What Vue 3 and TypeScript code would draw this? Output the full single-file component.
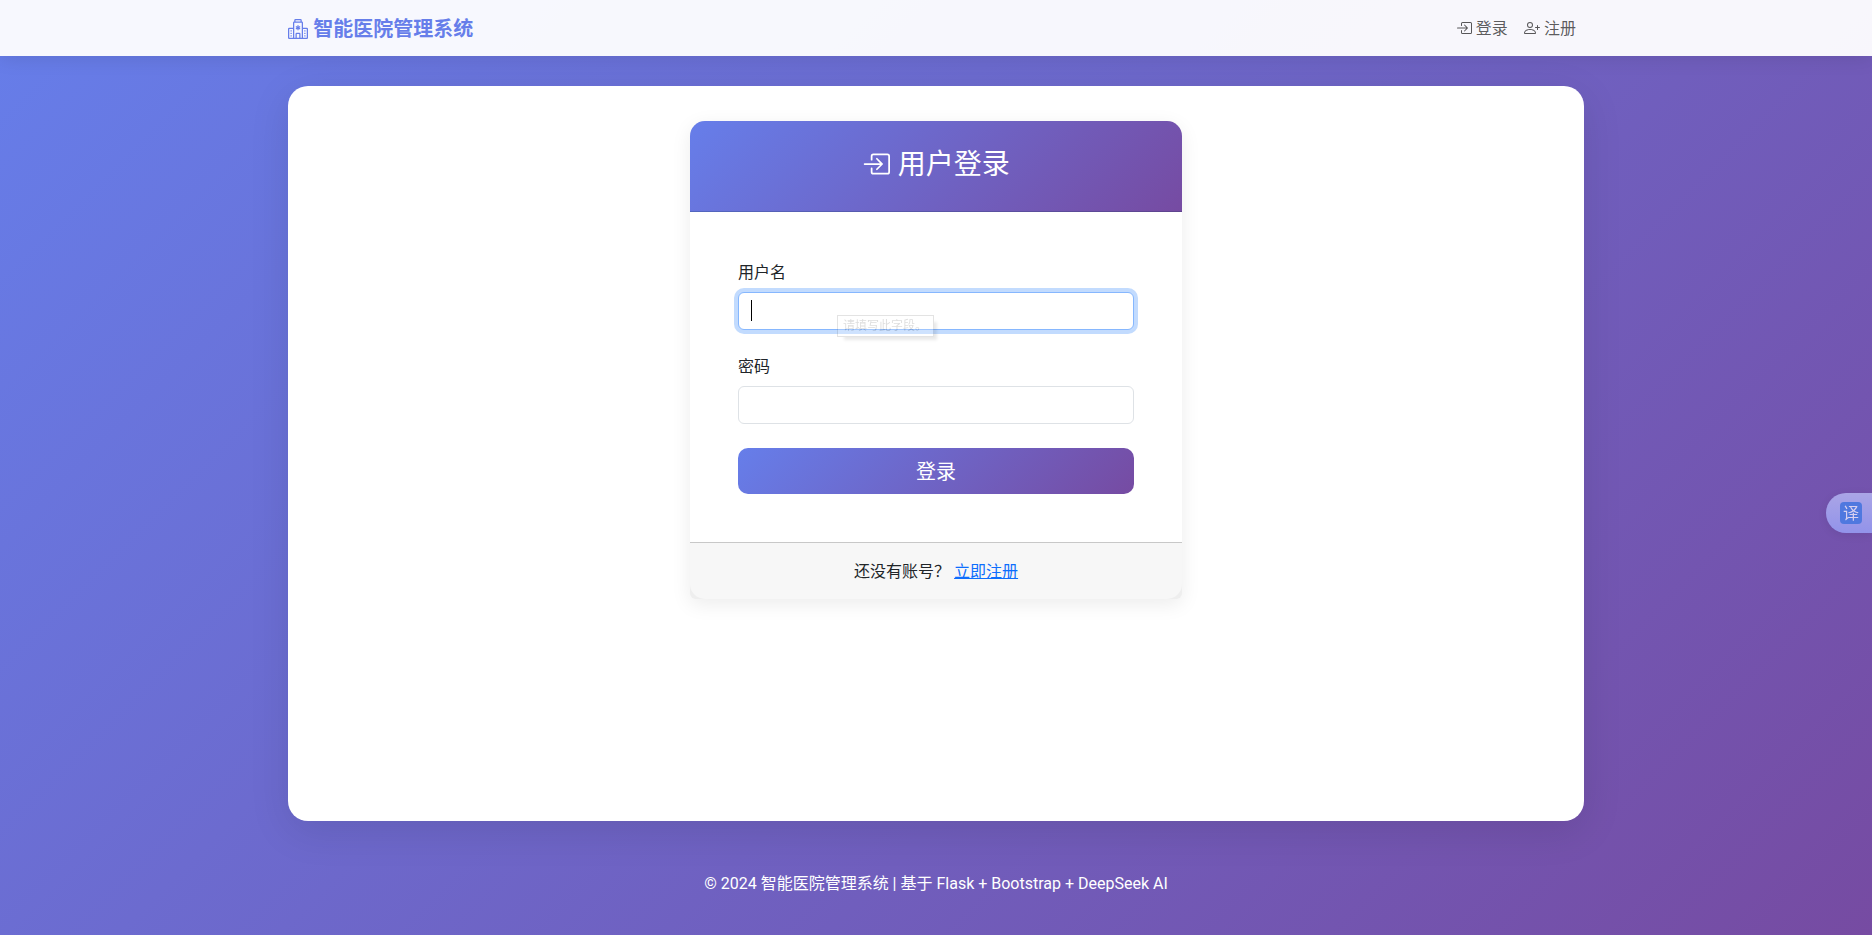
<script setup lang="ts">
import { onMounted, ref } from 'vue'

const username = ref('')
const password = ref('')
const usernameInput = ref<HTMLInputElement | null>(null)

onMounted(() => usernameInput.value?.focus())
</script>

<template>
  <div class="page">
    <nav class="navbar">
      <div class="container navbar-inner">
        <a class="brand" href="#">
          <svg class="icon" viewBox="0 0 16 16" aria-hidden="true">
            <path d="M8.500 5.034v1.100l.953-.550.500.867L9 7l.953.550-.500.866-.953-.550v1.100h-1v-1.100l-.953.550-.500-.866L7 7l-.953-.550.500-.866.953.550v-1.100zM13.250 9a.25.25 0 0 0-.25.25v.5c0 .138.112.25.25.25h.5a.25.25 0 0 0 .25-.25v-.5a.25.25 0 0 0-.25-.25zM13 11.250a.25.25 0 0 1 .25-.25h.5a.25.25 0 0 1 .25.25v.5a.25.25 0 0 1-.25.25h-.5a.25.25 0 0 1-.25-.25zm.25 1.750a.25.25 0 0 0-.25.25v.5c0 .138.112.25.25.25h.5a.25.25 0 0 0 .25-.25v-.5a.25.25 0 0 0-.25-.25zm-11-4a.25.25 0 0 0-.25.25v.5c0 .138.112.25.25.25h.5A.25.25 0 0 0 3 9.750v-.5A.25.25 0 0 0 2.750 9zm0 2a.25.25 0 0 0-.25.25v.5c0 .138.112.25.25.25h.5a.25.25 0 0 0 .25-.25v-.5a.25.25 0 0 0-.25-.25zM2 13.250a.25.25 0 0 1 .25-.25h.5a.25.25 0 0 1 .25.25v.5a.25.25 0 0 1-.25.25h-.5a.25.25 0 0 1-.25-.25z" />
            <path d="M5 1a1 1 0 0 1 1-1h4a1 1 0 0 1 1 1v1a1 1 0 0 1 1 1v4h3a1 1 0 0 1 1 1v7a1 1 0 0 1-1 1H1a1 1 0 0 1-1-1V8a1 1 0 0 1 1-1h3V3a1 1 0 0 1 1-1zm2 14h2v-3H7zm3 0h1V3H5v12h1v-3a1 1 0 0 1 1-1h2a1 1 0 0 1 1 1zm0-14H6v1h4zm2 7v7h3V8zm-8 7V8H1v7z" />
          </svg>
          智能医院管理系统
        </a>
        <div class="nav-links">
          <a class="nav-link" href="#login">
            <svg class="icon" viewBox="0 0 16 16" aria-hidden="true">
              <path fill-rule="evenodd" d="M6 3.500a.5.5 0 0 1 .5-.5h8a.5.5 0 0 1 .5.5v9a.5.5 0 0 1-.5.5h-8a.5.5 0 0 1-.5-.5v-2a.5.5 0 0 0-1 0v2A1.500 1.500 0 0 0 6.500 14h8a1.500 1.500 0 0 0 1.500-1.500v-9A1.500 1.500 0 0 0 14.500 2h-8A1.500 1.500 0 0 0 5 3.500v2a.5.5 0 0 0 1 0z" />
              <path fill-rule="evenodd" d="M11.854 8.354a.5.5 0 0 0 0-.708l-3-3a.5.5 0 1 0-.708.708L10.293 7.500H1.500a.5.5 0 0 0 0 1h8.793l-2.147 2.146a.5.5 0 0 0 .708.708z" />
            </svg>
            登录
          </a>
          <a class="nav-link" href="#register">
            <svg class="icon" viewBox="0 0 16 16" aria-hidden="true">
              <path d="M6 8a3 3 0 1 0 0-6 3 3 0 0 0 0 6m2-3a2 2 0 1 1-4 0 2 2 0 0 1 4 0m4 8c0 1-1 1-1 1H1s-1 0-1-1 1-4 6-4 6 3 6 4m-1-.004c-.001-.246-.154-.986-.832-1.664C9.516 10.680 8.289 10 6 10s-3.516.680-4.168 1.332c-.678.678-.830 1.418-.832 1.664z" />
              <path fill-rule="evenodd" d="M13.500 5a.5.5 0 0 1 .5.5V7h1.500a.5.5 0 0 1 0 1H14v1.500a.5.5 0 0 1-1 0V8h-1.500a.5.5 0 0 1 0-1H13V5.500a.5.5 0 0 1 .5-.5" />
            </svg>
            注册
          </a>
        </div>
      </div>
    </nav>

    <div class="container">
      <main class="main-content">
        <section class="card">
          <header class="card-header">
            <h3>
              <svg class="icon" viewBox="0 0 16 16" aria-hidden="true">
                <path fill-rule="evenodd" d="M6 3.500a.5.5 0 0 1 .5-.5h8a.5.5 0 0 1 .5.5v9a.5.5 0 0 1-.5.5h-8a.5.5 0 0 1-.5-.5v-2a.5.5 0 0 0-1 0v2A1.500 1.500 0 0 0 6.500 14h8a1.500 1.500 0 0 0 1.500-1.500v-9A1.500 1.500 0 0 0 14.500 2h-8A1.500 1.500 0 0 0 5 3.500v2a.5.5 0 0 0 1 0z" />
                <path fill-rule="evenodd" d="M11.854 8.354a.5.5 0 0 0 0-.708l-3-3a.5.5 0 1 0-.708.708L10.293 7.500H1.500a.5.5 0 0 0 0 1h8.793l-2.147 2.146a.5.5 0 0 0 .708.708z" />
              </svg>
              用户登录
            </h3>
          </header>
          <form class="card-body" @submit.prevent>
            <div class="field">
              <label for="username">用户名</label>
              <div class="control">
                <input
                  id="username"
                  ref="usernameInput"
                  v-model="username"
                  class="input focused"
                  type="text"
                  autocomplete="off"
                  required
                />
                <span v-if="!username" class="caret"></span>
                <span class="hint" role="tooltip">请填写此字段。</span>
              </div>
            </div>
            <div class="field">
              <label for="password">密码</label>
              <input id="password" v-model="password" class="input" type="password" required />
            </div>
            <button class="submit" type="submit">登录</button>
          </form>
          <footer class="card-footer">
            还没有账号？ <a href="#register">立即注册</a>
          </footer>
        </section>
      </main>
    </div>

    <footer class="site-footer">© 2024 智能医院管理系统 | 基于 Flask + Bootstrap + DeepSeek AI</footer>

    <button class="translate" type="button" aria-label="翻译">
      <span class="translate-glyph">译</span>
    </button>
  </div>
</template>

<style>
body {
  margin: 0;
}
</style>

<style scoped>
.page,
.page * {
  box-sizing: border-box;
}

.page {
  --accent: linear-gradient(135deg, #667eea 0%, #764ba2 100%);
  min-height: 100vh;
  background: var(--accent);
  color: #212529;
  font-family: "Noto Sans", "Noto Sans CJK SC", sans-serif;
  font-size: 16px;
  line-height: 24px;
}

.container {
  width: 100%;
  max-width: 1320px;
  margin: 0 auto;
  padding: 0 12px;
}

.icon {
  width: 1em;
  height: 1em;
  fill: currentColor;
  vertical-align: -0.125em;
}

.navbar {
  padding: 8px 0;
  background: rgba(255, 255, 255, 0.95);
  box-shadow: 0 2px 20px rgba(0, 0, 0, 0.1);
}

.navbar-inner {
  display: flex;
  align-items: center;
  justify-content: space-between;
}

.brand {
  padding-top: 2px;
  color: #667eea;
  font-size: 20px;
  font-weight: 700;
  line-height: 30px;
  text-decoration: none;
}

.nav-links {
  display: flex;
}

.nav-link {
  padding: 8px;
  color: rgba(0, 0, 0, 0.65);
  text-decoration: none;
}

.main-content {
  min-height: calc(100vh - 200px);
  margin-top: 30px;
  padding: 35px;
  border-radius: 20px;
  background: #fff;
  box-shadow: 0 10px 40px rgba(0, 0, 0, 0.1);
}

.card {
  width: 100%;
  max-width: 492px;
  margin: 0 auto;
  border-radius: 15px 15px 6px 6px;
  background: #eee;
  box-shadow: 0 5px 20px rgba(0, 0, 0, 0.08);
}

.card-header {
  padding: 25px 16px 23px;
  border-bottom: 1px solid rgba(0, 0, 0, 0.18);
  border-radius: 15px 15px 0 0;
  background: var(--accent);
  color: #fff;
  text-align: center;
}

.card-header h3 {
  margin: 0 0 8px;
  font-size: 28px;
  font-weight: 400;
  line-height: 34px;
}

.card-body {
  padding: 48px;
  background: #fff;
}

.field {
  margin-bottom: 24px;
}

.field label {
  display: block;
  margin-bottom: 8px;
}

.control {
  position: relative;
}

.input {
  display: block;
  width: 100%;
  height: 38px;
  padding: 6px 12px;
  border: 1px solid #dee2e6;
  border-radius: 6px;
  outline: 0;
  background: #fff;
  color: inherit;
  font: inherit;
}

.input.focused {
  border-color: #86b7fe;
  box-shadow: 0 0 0 4px rgba(13, 110, 253, 0.25);
  caret-color: transparent;
}

.caret {
  position: absolute;
  top: 8px;
  left: 13px;
  width: 1px;
  height: 21px;
  background: #000;
}

.hint {
  position: absolute;
  top: 23px;
  left: 99px;
  padding: 0 6px 0 5px;
  border: 1px solid #767676;
  background: #fff;
  box-shadow: 5px 5px 3px -2px rgba(0, 0, 0, 0.45);
  color: #575757;
  font-size: 12px;
  line-height: 20px;
  white-space: nowrap;
  opacity: 0.2;
}

.submit {
  display: block;
  width: 100%;
  padding: 9px 16px 7px;
  border: 0;
  border-radius: 10px;
  background: var(--accent);
  color: #fff;
  font: inherit;
  font-size: 20px;
  line-height: 30px;
}

.card-footer {
  padding: 16px;
  border-top: 1px solid #c8c8c8;
  border-radius: 0 0 15px 15px;
  background: #f7f7f7;
  text-align: center;
}

.card-footer a {
  color: #0d6efd;
}

.site-footer {
  margin-top: 30px;
  padding: 21px 0 19px;
  color: #fff;
  font-family: Roboto, "Noto Sans CJK SC", sans-serif;
  text-align: center;
}

.translate {
  position: fixed;
  top: 493px;
  right: 0;
  display: flex;
  align-items: center;
  width: 46px;
  height: 40px;
  padding: 0 0 0 14px;
  border: 0;
  border-radius: 20px 0 0 20px;
  background: linear-gradient(#aaa5e6, #9293ea);
  box-shadow: 0 2px 10px rgba(0, 0, 0, 0.08);
  font-family: inherit;
}

.translate-glyph {
  width: 22px;
  border-radius: 4px;
  background: #4f78df;
  color: #d9d0f0;
  font-size: 16px;
  line-height: 22px;
  text-align: center;
}
</style>
